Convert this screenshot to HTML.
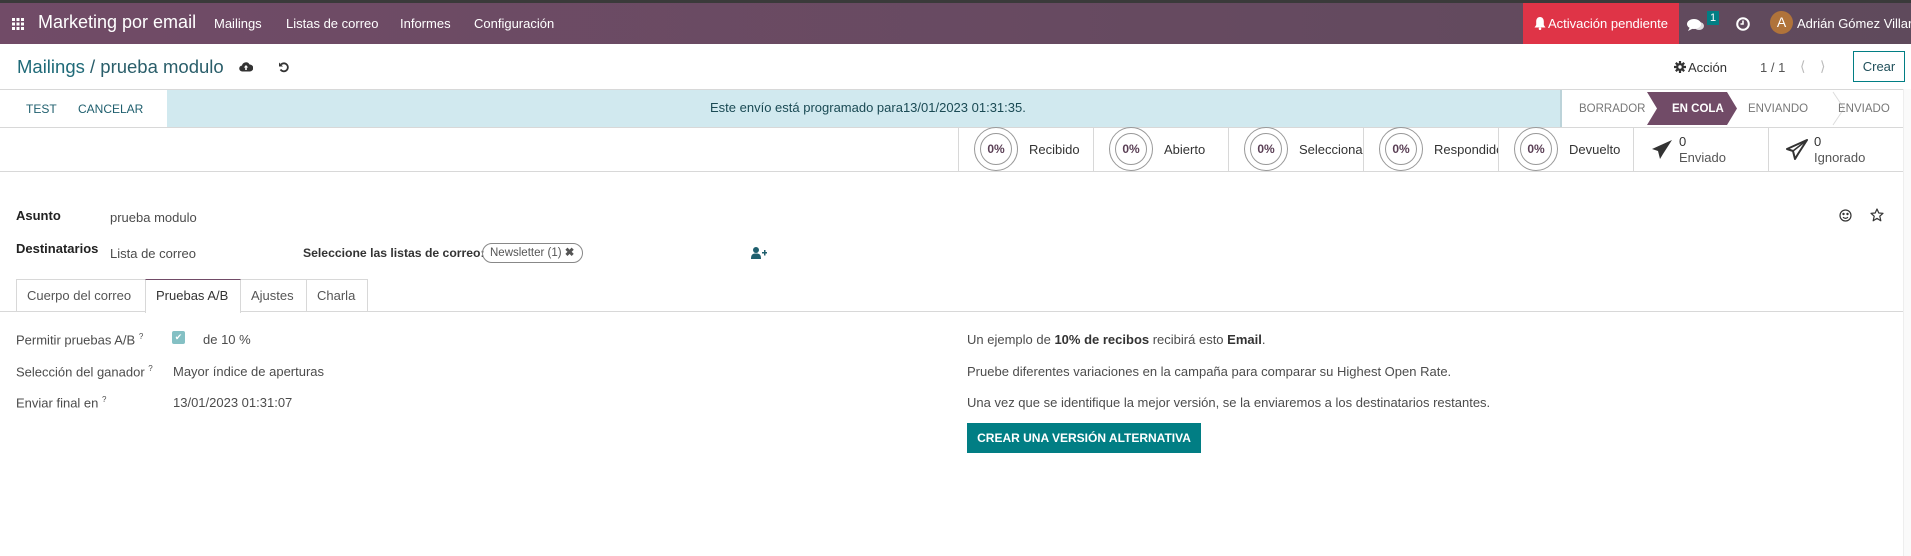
<!DOCTYPE html>
<html><head><meta charset="utf-8"><style>
*{box-sizing:border-box;margin:0;padding:0}
body{width:1911px;height:556px;overflow:hidden;background:#fff;font-family:"Liberation Sans",sans-serif;font-size:13px;color:#4c4c4c;position:relative}
.a{position:absolute;white-space:nowrap}
.top{position:absolute;left:0;top:0;width:1911px;height:3px;background:#3a3a3a}
.nav{position:absolute;left:0;top:3px;width:1911px;height:41px;background:linear-gradient(90deg,#714b67,#5f4a5c);color:#fff}
.nav .a{top:13px;color:#fff;font-size:13px}
.stat{position:absolute;top:127px;height:44px;border-left:1px solid #d8d8d8}
.circ{position:absolute;left:15px;top:0px;width:44px;height:44px;border:1px solid #999;border-radius:50%}
.circ i{position:absolute;left:5px;top:5px;width:32px;height:32px;border:1px solid #999;border-radius:50%;font-style:normal;font-weight:bold;font-size:12px;text-align:center;line-height:30px;color:#5a3f55}
.lab{position:absolute;left:70px;top:15px;color:#333;white-space:nowrap;overflow:hidden}
.tab{position:absolute;top:279px;height:33px;border:1px solid #d8d8d8;border-bottom:none;padding:0 10px;line-height:31px;color:#555}
</style></head><body>
<div class="top"></div>
<div class="nav">
 <svg class="a" style="left:12px;top:15px" width="12" height="12" viewBox="0 0 12 12" fill="#fff"><rect x="0" y="0" width="3" height="3"/><rect x="4.5" y="0" width="3" height="3"/><rect x="9" y="0" width="3" height="3"/><rect x="0" y="4.5" width="3" height="3"/><rect x="4.5" y="4.5" width="3" height="3"/><rect x="9" y="4.5" width="3" height="3"/><rect x="0" y="9" width="3" height="3"/><rect x="4.5" y="9" width="3" height="3"/><rect x="9" y="9" width="3" height="3"/></svg>
 <div class="a" style="left:38px;top:9px;font-size:18px">Marketing por email</div>
 <div class="a" style="left:214px">Mailings</div>
 <div class="a" style="left:286px">Listas de correo</div>
 <div class="a" style="left:400px">Informes</div>
 <div class="a" style="left:474px">Configuración</div>
 <div style="position:absolute;left:1523px;top:0;width:156px;height:41px;background:#df3447"></div>
 <svg class="a" style="left:1534px;top:14px" width="12" height="13" viewBox="0 0 12 13" fill="#fff"><path d="M6 0C3.5 0 2.2 2 2.2 4.5V8L0.5 10.5h11L9.8 8V4.5C9.8 2 8.5 0 6 0z"/><circle cx="6" cy="11.8" r="1.3"/></svg>
 <div class="a" style="left:1548px">Activación pendiente</div>
 <svg class="a" style="left:1687px;top:15px" width="18" height="14" viewBox="0 0 18 14" fill="#fff"><ellipse cx="7" cy="6" rx="7" ry="5"/><path d="M3 9L1 13L7 10z"/><ellipse cx="12" cy="8" rx="5" ry="4" opacity=".8"/></svg>
 <div class="a" style="left:1707px;top:8px;width:12px;height:14px;background:#017e84;font-size:11px;text-align:center;line-height:14px">1</div>
 <svg class="a" style="left:1736px;top:14px" width="14" height="14" viewBox="0 0 14 14"><circle cx="7" cy="7" r="5.8" fill="none" stroke="#fff" stroke-width="2"/><path d="M7 3.5V7H4.5" fill="none" stroke="#fff" stroke-width="1.6"/></svg>
 <div class="a" style="left:1770px;top:8px;width:23px;height:23px;border-radius:50%;background:#b0733a;text-align:center;line-height:23px;font-size:14px">A</div>
 <div class="a" style="left:1797px">Adrián Gómez Villar</div>
</div>
<div class="a" style="left:17px;top:56px;font-size:18.5px;color:#2a5e6a"><span style="color:#1f6a78">Mailings</span> / prueba modulo</div>
<svg class="a" style="left:239px;top:61px" width="14" height="11" viewBox="0 0 14 11"><path d="M3.5 10.5A3 3 0 0 1 3 4.5 4 4 0 0 1 10.5 3.5 3.5 3.5 0 0 1 11 10.5z" fill="#333"/><path d="M7 4L4.8 6.5H6.2V9H7.8V6.5H9.2z" fill="#fff"/></svg>
<svg class="a" style="left:278px;top:61px" width="12" height="12" viewBox="0 0 12 12"><path d="M3 3.5A4 4 0 1 1 2.5 8.5" fill="none" stroke="#333" stroke-width="1.8"/><path d="M1 1.5V5.5H5z" fill="#333"/></svg>
<svg class="a" style="left:1674px;top:61px" width="12" height="12" viewBox="0 0 12 12"><circle cx="6" cy="6" r="4" fill="#333"/><g stroke="#333" stroke-width="2.2"><path d="M6 0V12M0 6H12M1.8 1.8L10.2 10.2M10.2 1.8L1.8 10.2"/></g><circle cx="6" cy="6" r="1.7" fill="#fff"/></svg>
<div class="a" style="left:1688px;top:60px;color:#333">Acción</div>
<div class="a" style="left:1760px;top:60px;color:#555">1 / 1</div>
<div class="a" style="left:1800px;top:58px;color:#bbb;font-size:14px">&#10216;</div>
<div class="a" style="left:1820px;top:58px;color:#bbb;font-size:14px">&#10217;</div>
<div class="a" style="left:1853px;top:51px;width:52px;height:31px;border:1px solid #017e84;text-align:center;line-height:29px;color:#1f4f5a">Crear</div>
<div style="position:absolute;left:0;top:89px;width:1903px;border-top:1px solid #d8d8d8"></div>
<div class="a" style="left:26px;top:102px;color:#1f5f6e;font-size:12px">TEST</div>
<div class="a" style="left:78px;top:102px;color:#1f5f6e;font-size:12px">CANCELAR</div>
<div style="position:absolute;left:167px;top:90px;width:1395px;height:37px;background:#d1e9ef;border-right:2px solid #bcd3d9"></div>
<div class="a" style="left:710px;top:100px;color:#1a4a54">Este envío está programado para13/01/2023 01:31:35.</div>
<svg class="a" style="left:1562px;top:90px" width="341" height="37"><polygon points="85,2 165,2 175,18.5 165,35 85,35 95,18.5" fill="#714b67"/><polyline points="271,2 282,18.5 271,35" fill="none" stroke="#ddd"/></svg>
<div class="a" style="left:1579px;top:103px;font-size:11.5px;color:#777">BORRADOR</div>
<div class="a" style="left:1672px;top:103px;font-size:11.5px;color:#fff;font-weight:bold">EN COLA</div>
<div class="a" style="left:1748px;top:103px;font-size:11.5px;color:#777">ENVIANDO</div>
<div class="a" style="left:1838px;top:103px;font-size:11.5px;color:#777">ENVIADO</div>
<div style="position:absolute;left:0;top:127px;width:1903px;border-top:1px solid #d8d8d8"></div>
<div class="stat" style="left:958px;width:135px"><div class="circ"><i>0%</i></div><div class="lab">Recibido</div></div>
<div class="stat" style="left:1093px;width:135px"><div class="circ"><i>0%</i></div><div class="lab">Abierto</div></div>
<div class="stat" style="left:1228px;width:135px"><div class="circ"><i>0%</i></div><div class="lab" style="width:64px">Seleccionado</div></div>
<div class="stat" style="left:1363px;width:135px"><div class="circ"><i>0%</i></div><div class="lab" style="width:64px">Respondido</div></div>
<div class="stat" style="left:1498px;width:135px"><div class="circ"><i>0%</i></div><div class="lab">Devuelto</div></div>
<div class="stat" style="left:1633px;width:135px">
 <svg class="a" style="left:17px;top:12px" width="22" height="22" viewBox="0 0 22 22"><path d="M21 1L1 10L7 12L9 20L12 15z" fill="#333"/></svg>
 <div class="a" style="left:45px;top:7px;color:#333">0</div><div class="a" style="left:45px;top:23px;color:#555">Enviado</div></div>
<div class="stat" style="left:1768px;width:135px">
 <svg class="a" style="left:17px;top:12px" width="22" height="22" viewBox="0 0 22 22"><path d="M21 1L1 10L7 12L9 20L12 15z" fill="none" stroke="#333" stroke-width="2" stroke-linejoin="round"/><path d="M21 1L7 12" stroke="#333" stroke-width="1.5"/></svg>
 <div class="a" style="left:45px;top:7px;color:#333">0</div><div class="a" style="left:45px;top:23px;color:#555">Ignorado</div></div>
<div style="position:absolute;left:0;top:171px;width:1903px;border-top:1px solid #d8d8d8"></div>
<div style="position:absolute;left:1903px;top:89px;width:8px;height:467px;background:#fafafa;border-left:1px solid #eee"></div>
<div class="a" style="left:16px;top:208px;font-weight:bold;color:#222">Asunto</div>
<div class="a" style="left:110px;top:210px">prueba modulo</div>
<div class="a" style="left:16px;top:241px;font-weight:bold;color:#222">Destinatarios</div>
<div class="a" style="left:110px;top:246px">Lista de correo</div>
<div class="a" style="left:303px;top:246px;font-weight:bold;color:#333;font-size:12.2px">Seleccione las listas de correo:</div>
<div class="a" style="left:482px;top:243px;width:101px;height:20px;border:1px solid #888;border-radius:10px;font-size:11.5px;line-height:18px;padding-left:7px;color:#555">Newsletter (1) <b>✖</b></div>
<svg class="a" style="left:751px;top:247px" width="16" height="12" viewBox="0 0 16 12" fill="#1f5f6e"><circle cx="5" cy="3" r="3"/><path d="M0 12C0 7 2 6.5 5 6.5S10 7 10 12z"/><path d="M11 5h2V3h1.5v2h2v1.5h-2v2H13v-2h-2z"/></svg>
<svg class="a" style="left:1839px;top:209px" width="13" height="13" viewBox="0 0 13 13" fill="none" stroke="#333" stroke-width="1.2"><circle cx="6.5" cy="6.5" r="5.5"/><circle cx="4.5" cy="5" r=".6" fill="#333"/><circle cx="8.5" cy="5" r=".6" fill="#333"/><path d="M4 8.2Q6.5 10.5 9 8.2"/></svg>
<svg class="a" style="left:1870px;top:208px" width="14" height="14" viewBox="0 0 14 14"><polygon points="7,1 8.8,5 13,5.3 9.8,8.2 10.8,12.8 7,10.4 3.2,12.8 4.2,8.2 1,5.3 5.2,5" fill="none" stroke="#333" stroke-width="1.2" stroke-linejoin="round"/></svg>
<div class="tab" style="left:16px;width:130px">Cuerpo del correo</div>
<div class="tab" style="left:145px;width:96px;border-top:1px solid #714b67;background:#fff;height:34px;color:#333;z-index:2">Pruebas A/B</div>
<div class="tab" style="left:240px;width:67px">Ajustes</div>
<div class="tab" style="left:306px;width:62px">Charla</div>
<div style="position:absolute;left:0;top:311px;width:1903px;border-top:1px solid #d8d8d8"></div>
<div class="a" style="left:16px;top:332px">Permitir pruebas A/B <sup style="font-size:8px">?</sup></div>
<div class="a" style="left:172px;top:331px;width:13px;height:13px;background:#84c0c4;border-radius:2px;color:#fff;font-size:9px;text-align:center;line-height:13px">✔</div>
<div class="a" style="left:203px;top:332px">de 10 %</div>
<div class="a" style="left:16px;top:364px">Selección del ganador <sup style="font-size:8px">?</sup></div>
<div class="a" style="left:173px;top:364px">Mayor índice de aperturas</div>
<div class="a" style="left:16px;top:395px">Enviar final en <sup style="font-size:8px">?</sup></div>
<div class="a" style="left:173px;top:395px">13/01/2023 01:31:07</div>
<div class="a" style="left:967px;top:332px">Un ejemplo de <b style="color:#333">10% de recibos</b> recibirá esto <b style="color:#333">Email</b>.</div>
<div class="a" style="left:967px;top:364px">Pruebe diferentes variaciones en la campaña para comparar su Highest Open Rate.</div>
<div class="a" style="left:967px;top:395px">Una vez que se identifique la mejor versión, se la enviaremos a los destinatarios restantes.</div>
<div class="a" style="left:967px;top:423px;width:234px;height:30px;background:#017e84;color:#fff;font-weight:bold;font-size:12px;text-align:center;line-height:30px">CREAR UNA VERSIÓN ALTERNATIVA</div>
</body></html>
